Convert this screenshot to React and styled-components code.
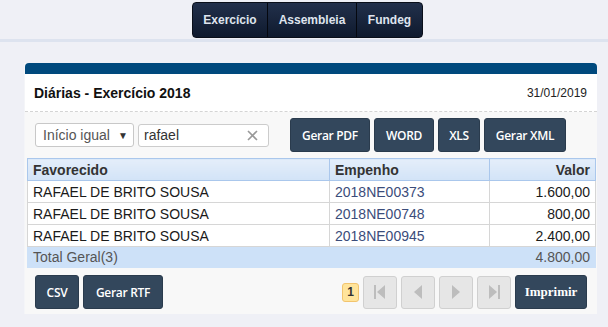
import styled, { createGlobalStyle } from 'styled-components';

const Global = createGlobalStyle`
  html, body { margin: 0; padding: 0; background: #eff0f6; }
  body { font-family: "Liberation Sans", Arial, sans-serif; }
`;

const rows = [
  { nome: 'RAFAEL DE BRITO SOUSA', empenho: '2018NE00373', valor: '1.600,00' },
  { nome: 'RAFAEL DE BRITO SOUSA', empenho: '2018NE00748', valor: '800,00' },
  { nome: 'RAFAEL DE BRITO SOUSA', empenho: '2018NE00945', valor: '2.400,00' },
];

const App = () => {
  return (
    <>
      <Global />
      <TopBar>
        <NavGroup>
          <NavButton w={74}>Exercício</NavButton>
          <NavButton w={88}>Assembleia</NavButton>
          <NavButton w={65} last>Fundeg</NavButton>
        </NavGroup>
      </TopBar>
      <Panel>
        <PanelStripe />
        <PanelHeader>
          <Title>Diárias - Exercício 2018</Title>
          <DateText>31/01/2019</DateText>
        </PanelHeader>
        <PanelBody>
          <Toolbar>
            <Select>
              <span>Início igual</span>
              <Caret>▼</Caret>
            </Select>
            <SearchBox>
              <span>rafael</span>
              <svg width="11" height="11" viewBox="0 0 11 11">
                <path d="M1 1L10 10M10 1L1 10" stroke="#999" strokeWidth="1.6" />
              </svg>
            </SearchBox>
            <ButtonGroup>
              <DarkButton w={80}>Gerar PDF</DarkButton>
              <DarkButton w={60}>WORD</DarkButton>
              <DarkButton w={42}>XLS</DarkButton>
              <DarkButton w={82}>Gerar XML</DarkButton>
            </ButtonGroup>
          </Toolbar>
          <Table>
            <colgroup>
              <col style={{ width: 302 }} />
              <col style={{ width: 160 }} />
              <col style={{ width: 106 }} />
            </colgroup>
            <thead>
              <tr>
                <Th>Favorecido</Th>
                <Th>Empenho</Th>
                <Th right>Valor</Th>
              </tr>
            </thead>
            <tbody>
              {rows.map((r) => (
                <tr key={r.empenho}>
                  <Td>{r.nome}</Td>
                  <Td link>{r.empenho}</Td>
                  <Td right>{r.valor}</Td>
                </tr>
              ))}
              <tr>
                <TotalTd colSpan={2}>Total Geral(3)</TotalTd>
                <TotalTd right>4.800,00</TotalTd>
              </tr>
            </tbody>
          </Table>
          <Footer>
            <ButtonGroup>
              <DarkButton w={44}>CSV</DarkButton>
              <DarkButton w={80}>Gerar RTF</DarkButton>
            </ButtonGroup>
            <Pager>
              <PageNum>1</PageNum>
              <PagerButton>
                <svg width="12" height="14" viewBox="0 0 12 14">
                  <rect x="0" y="0" width="2" height="14" fill="#bdbdbd" />
                  <path d="M11 0L3 7L11 14Z" fill="#bdbdbd" />
                </svg>
              </PagerButton>
              <PagerButton>
                <svg width="10" height="14" viewBox="0 0 10 14">
                  <path d="M9 0L1 7L9 14Z" fill="#bdbdbd" />
                </svg>
              </PagerButton>
              <PagerButton>
                <svg width="10" height="14" viewBox="0 0 10 14">
                  <path d="M1 0L9 7L1 14Z" fill="#bdbdbd" />
                </svg>
              </PagerButton>
              <PagerButton>
                <svg width="12" height="14" viewBox="0 0 12 14">
                  <path d="M1 0L9 7L1 14Z" fill="#bdbdbd" />
                  <rect x="10" y="0" width="2" height="14" fill="#bdbdbd" />
                </svg>
              </PagerButton>
              <PrintButton>Imprimir</PrintButton>
            </Pager>
          </Footer>
        </PanelBody>
      </Panel>
    </>
  );
};

export default App;

const TopBar = styled.div`
  display: flex;
  justify-content: center;
  padding: 2px 0 1px 7px;
  border-bottom: 3px solid #dde3ef;
`;

const NavGroup = styled.div`
  display: flex;
  height: 34px;
  border: 1px solid #0a0f1a;
  border-radius: 4px;
  overflow: hidden;
  background: linear-gradient(#22304b, #0f1a2e);
`;

const NavButton = styled.div`
  width: ${(p) => p.w}px;
  display: flex;
  align-items: center;
  justify-content: center;
  color: #dfe4ee;
  font-size: 12px;
  font-weight: bold;
  border-right: ${(p) => (p.last ? 'none' : '1px solid #05080f')};
`;

const Panel = styled.div`
  margin: 21px 10px 0 25px;
  width: 572px;
  background: #f8f8f8;
  box-shadow: -1px 0 0 #f4f5f8;
`;

const PanelStripe = styled.div`
  height: 11px;
  background: #00497d;
  border-radius: 4px 4px 0 0;
`;

const PanelHeader = styled.div`
  height: 37px;
  background: #fff;
  border-bottom: 1px dashed #d4d4d4;
  display: flex;
  align-items: center;
  justify-content: space-between;
  padding: 0 10px 0 9px;
`;

const Title = styled.div`
  font-size: 14px;
  font-weight: bold;
  color: #111;
`;

const DateText = styled.div`
  font-size: 12px;
  color: #222;
`;

const PanelBody = styled.div`
  padding: 6px 2px 5px;
`;

const Toolbar = styled.div`
  display: flex;
  align-items: center;
  height: 34px;
  padding: 0 8px;
`;

const Select = styled.div`
  box-sizing: border-box;
  width: 99px;
  height: 24px;
  border: 1px solid #c8c8c8;
  border-radius: 3px;
  background: #fff;
  display: flex;
  align-items: center;
  justify-content: space-between;
  padding: 0 5px 0 7px;
  font-size: 14px;
  color: #555;
`;

const Caret = styled.span`
  font-size: 10px;
  color: #333;
`;

const SearchBox = styled.div`
  box-sizing: border-box;
  width: 131px;
  height: 23px;
  margin-left: 4px;
  border: 1px solid #ccc;
  border-radius: 3px;
  background: #fff;
  display: flex;
  align-items: center;
  justify-content: space-between;
  padding: 0 10px 0 5px;
  font-size: 14px;
  color: #333;
`;

const ButtonGroup = styled.div`
  display: flex;
  gap: 4px;
  &:not(:first-child) { margin-left: 21px; }
`;

const DarkButton = styled.div`
  box-sizing: border-box;
  width: ${(p) => p.w}px;
  height: 34px;
  display: flex;
  align-items: center;
  justify-content: center;
  background: #33475c;
  border: 1px solid #2a3b4d;
  border-radius: 3px;
  color: #fff;
  font-family: "Open Sans", sans-serif;
  font-size: 12px;
  font-weight: 600;
  letter-spacing: -0.3px;
`;

const Table = styled.table`
  margin-top: 6px;
  width: 568px;
  border-collapse: collapse;
  table-layout: fixed;
  font-size: 14px;
`;

const Th = styled.th`
  height: 21px;
  padding: 0 5px;
  text-align: ${(p) => (p.right ? 'right' : 'left')};
  font-weight: bold;
  color: #333;
  background: linear-gradient(#e4eefa, #d2e3f7);
  border: 1px solid #aac7ec;
`;

const Td = styled.td`
  height: 21px;
  padding: 0 5px;
  text-align: ${(p) => (p.right ? 'right' : 'left')};
  color: ${(p) => (p.link ? '#3b4c7a' : '#1a1a1a')};
  background: #fff;
  border: 1px solid #d6d6d6;
  white-space: nowrap;
`;

const TotalTd = styled.td`
  height: 20px;
  padding: 0 5px;
  text-align: ${(p) => (p.right ? 'right' : 'left')};
  color: #555;
  background: #cde1f8;
  border: 1px solid #cde1f8;
  border-top-color: #d6d6d6;
`;

const Footer = styled.div`
  display: flex;
  justify-content: space-between;
  align-items: center;
  margin-top: 7px;
  padding: 0 8px;
  height: 34px;
`;

const Pager = styled.div`
  display: flex;
  align-items: center;
  gap: 4px;
`;

const PageNum = styled.div`
  box-sizing: border-box;
  width: 17px;
  height: 19px;
  display: flex;
  align-items: center;
  justify-content: center;
  background: #ffe49b;
  border: 1px solid #f2c46e;
  border-radius: 3px;
  font-size: 12px;
  font-weight: bold;
  color: #333;
`;

const PagerButton = styled.div`
  box-sizing: border-box;
  width: 34px;
  height: 33px;
  display: flex;
  align-items: center;
  justify-content: center;
  background: #e6e6e6;
  border: 1px solid #d0d0d0;
  border-radius: 3px;
`;

const PrintButton = styled(DarkButton)`
  width: 72px;
  font-family: "Liberation Serif", serif;
  font-size: 13px;
  font-weight: bold;
  letter-spacing: 0;
`;
